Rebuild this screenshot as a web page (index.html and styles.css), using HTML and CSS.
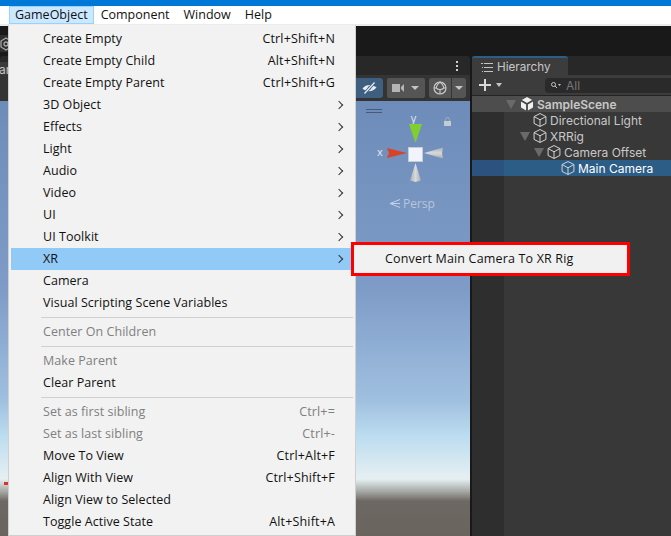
FILE: index.html
```html
<!DOCTYPE html>
<html lang="en">
<head>
<meta charset="utf-8">
<title>Unity GameObject menu</title>
<link rel="stylesheet" href="styles.css">
</head>
<body>
<div class="app">
  <div class="titlebar"></div>
  <nav class="menubar">
    <span class="mb-item active">GameObject</span>
    <span class="mb-item">Component</span>
    <span class="mb-item">Window</span>
    <span class="mb-item">Help</span>
  </nav>
  <div class="workspace">
    <section class="scene">
      <div class="scene-top">
        <div class="hex-btn">
          <svg width="12" height="14" viewBox="0 0 12 14" fill="none" stroke="#a8a8a8" stroke-width="1.300"><path d="M6 1 11 4V10L6 13 1 10V4Z"/><circle cx="6" cy="7" r="2"/></svg>
        </div>
      </div>
      <div class="scene-tabs">
        <div class="left-tab"><span>ar</span></div>
        <span class="dots"><i></i><i></i><i></i></span>
      </div>
      <div class="scene-tools">
        <div class="tool tool-eye">
          <svg width="15" height="12" viewBox="0 0 15 12"><path d="M.5 6.500C4 2 10.500 2 14.500 5.500 11 10 4.500 10.500.5 6.500Z" fill="#e8edf2"/><circle cx="7.500" cy="6" r="1.800" fill="#3f5f80"/><path d="M2.500 11.500 12.500.5" stroke="#3f5f80" stroke-width="3"/><path d="M2.500 11.500 12.500.5" stroke="#e8edf2" stroke-width="1.200"/></svg>
        </div>
        <div class="tool tool-cam">
          <svg width="12" height="8" viewBox="0 0 12 8"><rect width="8" height="8" fill="#b5b5b5"/><path d="M9 3 12 0V8L9 5Z" fill="#b5b5b5"/></svg>
          <i class="caret"></i>
        </div>
        <div class="tool tool-globe">
          <svg width="14" height="14" viewBox="0 0 14 14" fill="none" stroke="#c8c8c8" stroke-width="1.200"><circle cx="7" cy="7" r="6"/><path d="M7 1C4 3 3.500 5 3 7 5 9 9 9 11 7 10.500 5 10 3 7 1ZM3 7 1 7M11 7H13M7 8.500V13"/></svg>
        </div>
        <div class="tool tool-drop"><i class="caret"></i></div>
      </div>
      <div class="viewport">
        <i class="red-mark"></i>
        <div class="gizmo-bars"></div>
        <svg class="gizmo" width="90" height="80" viewBox="0 0 90 80">
          <defs>
            <linearGradient id="cone-h" x1="0" y1="0" x2="0" y2="1"><stop offset="0" stop-color="#a9acb2"/><stop offset=".5" stop-color="#d8d9dc"/><stop offset="1" stop-color="#a9acb2"/></linearGradient>
            <linearGradient id="cone-v" x1="0" y1="0" x2="1" y2="0"><stop offset="0" stop-color="#a9acb2"/><stop offset=".5" stop-color="#d8d9dc"/><stop offset="1" stop-color="#a9acb2"/></linearGradient>
          </defs>
          <text x="43.500" y="17" class="gz-label" text-anchor="middle">y</text>
          <path d="M39 19H52L45.500 38Z" fill="#7fd02f"/>
          <path d="M17 43 37 48 17 53 19 48Z" fill="#d8432a"/>
          <text x="10" y="51" class="gz-label" text-anchor="middle">x</text>
          <rect x="38.500" y="42.500" width="14" height="14" fill="#f1f5fb" stroke="#c6ccd4"/>
          <path d="M54 48 73 42.500 72 48 73 53.500Z" fill="url(#cone-h)"/>
          <path d="M45.500 58 40 75.500 45.500 77 51 75.500Z" fill="url(#cone-v)"/>
        </svg>
        <svg class="lock" width="7" height="9" viewBox="0 0 7 9"><path d="M1.500 4V2.500A2 2 0 0 1 5.500 2.500V4" fill="none" stroke="#9eadc6"/><rect y="4" width="7" height="5" fill="#c5cad3"/></svg>
        <div class="persp">
          <svg width="11" height="9" viewBox="0 0 11 9" fill="none" stroke="#c2cfe4"><path d="M11 .5 1 4.500 11 8.500M1 4.500H11"/></svg>
          <span>Persp</span>
        </div>
      </div>
    </section>
    <section class="hierarchy">
      <div class="h-top"></div>
      <div class="h-tabs">
        <div class="h-tab">
          <svg width="12" height="9" viewBox="0 0 12 9" fill="#c4c4c4"><rect x="3" y="0" width="9" height="1"/><rect x="3" y="4" width="9" height="1"/><rect x="3" y="8" width="9" height="1"/><rect x="0" y="0" width="2" height="1"/><rect x="1" y="4" width="1" height="1"/><rect x="1" y="8" width="1" height="1"/></svg>
          <span>Hierarchy</span>
        </div>
      </div>
      <div class="h-toolbar">
        <svg width="12" height="12" viewBox="0 0 12 12" fill="#d8d8d8"><rect x="5" width="2" height="12"/><rect y="5" width="12" height="2"/></svg>
        <i class="caret caret-small"></i>
        <div class="search">
          <svg width="10" height="7" viewBox="0 0 10 7" fill="none" stroke="#c4c4c4"><circle cx="2.500" cy="2.500" r="2"/><path d="M4 4 6 6"/><path d="M7 2H10L8.500 4Z" fill="#c4c4c4" stroke="none"/></svg>
          <span>All</span>
        </div>
      </div>
      <div class="tree">
        <div class="row row-scene"><i class="tri"></i><svg class="unity" width="14" height="14" viewBox="0 0 14 14"><path d="M7 0 13 3.500V10.500L7 14 1 10.500V3.500Z" fill="#f0f0f0"/><path d="M7 7V14M7 7 1 3.500M7 7 13 3.500" stroke="#444" stroke-width="1.800"/></svg><span>SampleScene</span></div>
        <div class="row row-l2"><svg class="cube" width="14" height="14" viewBox="1 .5 12 13"><use href="#cube"/></svg><span>Directional Light</span></div>
        <div class="row row-l1"><i class="tri"></i><svg class="cube" width="14" height="14" viewBox="1 .5 12 13"><use href="#cube"/></svg><span>XRRig</span></div>
        <div class="row row-l1b"><i class="tri"></i><svg class="cube" width="14" height="14" viewBox="1 .5 12 13"><use href="#cube"/></svg><span>Camera Offset</span></div>
        <div class="row row-l3 selected"><svg class="cube" width="14" height="14" viewBox="1 .5 12 13"><use href="#cube"/></svg><span>Main Camera</span></div>
      </div>
    </section>
  </div>

  <svg class="defs" width="0" height="0"><defs><g id="cube" fill="none" stroke="#d8d8d8" stroke-width=".9"><path d="M7 1 12.500 3.800V10.200L7 13 1.500 10.200V3.800Z"/><path d="M1.500 3.800 7 6.800 12.500 3.800M7 6.800V13"/></g></defs></svg>

  <div class="menu">
    <div class="mi"><span>Create Empty</span><kbd>Ctrl+Shift+N</kbd></div>
    <div class="mi"><span>Create Empty Child</span><kbd>Alt+Shift+N</kbd></div>
    <div class="mi"><span>Create Empty Parent</span><kbd>Ctrl+Shift+G</kbd></div>
    <div class="mi sub"><span>3D Object</span></div>
    <div class="mi sub"><span>Effects</span></div>
    <div class="mi sub"><span>Light</span></div>
    <div class="mi sub"><span>Audio</span></div>
    <div class="mi sub"><span>Video</span></div>
    <div class="mi sub"><span>UI</span></div>
    <div class="mi sub"><span>UI Toolkit</span></div>
    <div class="mi sub hot"><span>XR</span></div>
    <div class="mi"><span>Camera</span></div>
    <div class="mi"><span>Visual Scripting Scene Variables</span></div>
    <div class="sep"></div>
    <div class="mi off"><span>Center On Children</span></div>
    <div class="sep"></div>
    <div class="mi off"><span>Make Parent</span></div>
    <div class="mi"><span>Clear Parent</span></div>
    <div class="sep"></div>
    <div class="mi off"><span>Set as first sibling</span><kbd>Ctrl+=</kbd></div>
    <div class="mi off"><span>Set as last sibling</span><kbd>Ctrl+-</kbd></div>
    <div class="mi"><span>Move To View</span><kbd>Ctrl+Alt+F</kbd></div>
    <div class="mi"><span>Align With View</span><kbd>Ctrl+Shift+F</kbd></div>
    <div class="mi"><span>Align View to Selected</span></div>
    <div class="mi"><span>Toggle Active State</span><kbd>Alt+Shift+A</kbd></div>
  </div>

  <div class="submenu"><span>Convert Main Camera To XR Rig</span></div>
</div>
</body>
</html>
```
FILE: styles.css
```css
* { box-sizing: border-box; }
html, body { margin: 0; padding: 0; }
body { width: 671px; height: 536px; overflow: hidden; background: #191919; font-family: "Open Sans", "Noto Sans", sans-serif; }
.app { position: relative; width: 671px; height: 536px; display: flex; flex-direction: column; overflow: hidden; }
.titlebar { height: 6px; background: #0078d7; flex: none; }
.menubar { height: 20px; flex: none; background: #fff; display: flex; gap: 2px; padding-left: 9px; font-size: 12.500px; color: #111; border-bottom: 2px solid #ececec; }
.mb-item { padding: 0 6px; height: 18px; line-height: 17px; }
.mb-item.active { background: #cce8ff; box-shadow: inset 0 0 0 1px #99d1ff; margin-right: -1px; }
.workspace { flex: 1; min-height: 0; display: flex; gap: 2px; background: #191919; }
.scene { flex: none; width: 470px; display: flex; flex-direction: column; }
.scene-top { height: 30px; flex: none; padding-top: 9px; }
.hex-btn { width: 10px; height: 17px; background: #2e2e2e; display: flex; align-items: center; justify-content: flex-end; }
.hex-btn svg { flex: none; margin-right: -2px; }
.scene-tabs { height: 19px; flex: none; background: #282828; display: flex; justify-content: space-between; border-radius: 3px 3px 0 0; padding-right: 12px; }
.left-tab { width: 24px; height: 15px; margin-top: 6px; background: #3a3a3a; color: #c4c4c4; font-size: 12px; line-height: 15px; overflow: hidden; font-family: Inter, sans-serif; }
.left-tab span { display: block; margin-left: -1px; }
.dots { display: flex; flex-direction: column; justify-content: center; gap: 2px; }
.dots i { display: block; width: 2px; height: 2px; background: #d0d0d0; }
.scene-tools { height: 26px; flex: none; background: #343434; display: flex; align-items: center; padding-left: 356px; }
.tool { height: 20px; background: #555; border-radius: 2px; display: flex; align-items: center; flex: none; }
.tool-eye { width: 27px; margin-right: 4px; background: #3f5f80; justify-content: center; border-radius: 0 3px 3px 0; }
.tool-cam { width: 38px; padding-left: 5px; gap: 7px; margin-right: 4px; }
.tool-globe { width: 22px; justify-content: center; margin-right: 1px; border-radius: 3px 0 0 3px; }
.tool-drop { width: 14px; justify-content: center; border-radius: 0 3px 3px 0; }
.caret { display: block; width: 0; height: 0; border-left: 4px solid transparent; border-right: 4px solid transparent; border-top: 4px solid #c4c4c4; flex: none; }
.caret-small { border-left-width: 3.500px; border-right-width: 3.500px; }
.viewport { flex: 1; position: relative; background: linear-gradient(#6e8cb9 0, #7f9cc8 190px, #a0c0e0 300px, #bcdcf0 335px, #e6f0f2 378px, #a8aba8 390px, #6e6864 400px, #6a645f 100%); }
.red-mark { position: absolute; left: 4px; top: 381px; width: 5px; height: 3px; background: #d8342a; }
.gizmo-bars { position: absolute; left: 366px; top: 8px; width: 16px; height: 4px; border-top: 1px solid #48597a; border-bottom: 1px solid #48597a; }
.gizmo { position: absolute; left: 370px; top: 4px; }
.gz-label { font-size: 11px; fill: #e4e8ef; font-family: "Open Sans", sans-serif; }
.lock { position: absolute; left: 444px; top: 16px; }
.persp { position: absolute; left: 389px; top: 94px; display: flex; align-items: center; gap: 3px; color: #b8c5dc; font-size: 12px; }
.hierarchy { flex: 1; min-width: 0; display: flex; flex-direction: column; font-family: Inter, "Noto Sans", sans-serif; font-size: 12px; color: #c8c8c8; }
.h-top { height: 30px; flex: none; }
.h-tabs { height: 19px; flex: none; background: #282828; }
.h-tab { width: 96px; height: 19px; background: #3c3c3c; border-top: 2px solid #2c5d87; border-radius: 3px 3px 0 0; display: flex; align-items: center; gap: 4px; padding: 1px 0 0 9px; font-size: 11.700px; }
.h-toolbar { height: 21px; flex: none; background: #3c3c3c; border-bottom: 1px solid #232323; display: flex; align-items: center; padding-left: 7px; gap: 5px; }
.search { margin-left: 38px; flex: 1; height: 15px; background: #2a2a2a; border-radius: 4px 0 0 4px; display: flex; align-items: center; gap: 5px; padding-left: 6px; color: #777; }
.tree { flex: 1; background: linear-gradient(90deg, #2e2e2e 32px, #383838 32px); }
.row { height: 16px; display: flex; align-items: center; gap: 3px; white-space: nowrap; }
.row-scene { background: #4d4d4d; padding-left: 34px; font-weight: 600; color: #c8c8c8; }
.row-scene .tri { margin-right: 1px; }
.row-l1 { padding-left: 48px; }
.row-l1b { padding-left: 62px; }
.row-l2 { padding-left: 61px; }
.row-l3 { padding-left: 89px; }
.selected { background: linear-gradient(90deg, #2c5280 32px, #2c5d87 32px); color: #fff; }
.tri { display: block; width: 0; height: 0; border-left: 5px solid transparent; border-right: 5px solid transparent; border-top: 9px solid #6a6a6a; flex: none; }
.defs { position: absolute; }
.menu { position: absolute; left: 8px; top: 25px; width: 348px; height: 511px; background: #f2f2f2; border: 1px solid #cfcfcf; border-top: 0; padding: 3px 2px 0; font-size: 12.500px; letter-spacing: .05px; color: #111; z-index: 2; }
.mi { height: 22px; display: flex; justify-content: space-between; align-items: center; padding: 0 18px 2px 32px; white-space: nowrap; position: relative; }
.mi kbd { font: inherit; letter-spacing: .16px; }
.mi.off { color: #808080; }
.mi.hot { background: #91c9f7; }
.mi.sub::after { content: ""; position: absolute; right: 11px; top: 8px; width: 5px; height: 5px; border-top: 1px solid #333; border-right: 1px solid #333; transform: rotate(45deg); }
.sep { height: 1px; margin: 3px 0 3px 30px; background: #d0d0d0; }
.submenu { position: absolute; left: 351px; top: 242px; width: 279px; height: 34px; background: #f1f1f1; border: 3px solid #f00; z-index: 3; font-size: 12.500px; letter-spacing: .17px; color: #111; display: flex; align-items: center; padding: 0 0 2px 31px; white-space: nowrap; }
```
